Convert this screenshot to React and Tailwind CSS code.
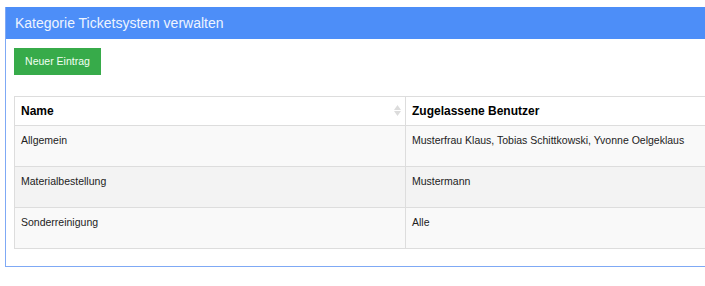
export default function App() {
  const rows = [
    { name: 'Allgemein', users: 'Musterfrau Klaus, Tobias Schittkowski, Yvonne Oelgeklaus', bg: 'bg-[#f9f9f9]' },
    { name: 'Materialbestellung', users: 'Mustermann', bg: 'bg-[#f3f3f3]' },
    { name: 'Sonderreinigung', users: 'Alle', bg: 'bg-[#f9f9f9]' },
  ];

  return (
    <div className="w-[705px] h-[286px] overflow-hidden bg-white pt-[7px] pl-[5px] font-['Liberation_Sans',Arial,sans-serif]">
      <div className="w-[720px] border-l border-b border-[#7fa9f5] pb-[17px]">
        <div className="h-[32px] bg-[#4d8ef8] pl-[9px] flex items-center text-[14px] text-[#eef4ff]">
          Kategorie Ticketsystem verwalten
        </div>
        <div className="pl-[8px] pt-[9px]">
          <button className="h-[27px] w-[87px] bg-[#37ab4a] text-[10.5px] text-[#f2fff2] flex items-center justify-center">
            Neuer Eintrag
          </button>
          <table className="mt-[21px] w-[720px] border-collapse text-[10.5px] text-[#222]">
            <thead>
              <tr className="h-[29px] bg-white">
                <th className="w-[391px] border border-[#dddddd] pl-[6px] text-left text-[12px] font-bold text-black relative">
                  Name
                  <span className="absolute right-[4px] top-[8px] flex flex-col items-center gap-[1px]">
                    <svg width="7" height="5" viewBox="0 0 7 5"><path d="M3.5 0L7 5H0z" fill="#dcdcdc" /></svg>
                    <svg width="7" height="5" viewBox="0 0 7 5"><path d="M0 0H7L3.5 5z" fill="#dcdcdc" /></svg>
                  </span>
                </th>
                <th className="border border-[#dddddd] pl-[6px] text-left text-[12px] font-bold text-black">
                  Zugelassene Benutzer
                </th>
              </tr>
            </thead>
            <tbody>
              {rows.map((r) => (
                <tr key={r.name} className={`h-[41px] ${r.bg}`}>
                  <td className="border border-[#dddddd] pl-[6px] pt-[7px] align-top">{r.name}</td>
                  <td className="border border-[#dddddd] pl-[6px] pt-[7px] align-top">{r.users}</td>
                </tr>
              ))}
            </tbody>
          </table>
        </div>
      </div>
    </div>
  );
}
